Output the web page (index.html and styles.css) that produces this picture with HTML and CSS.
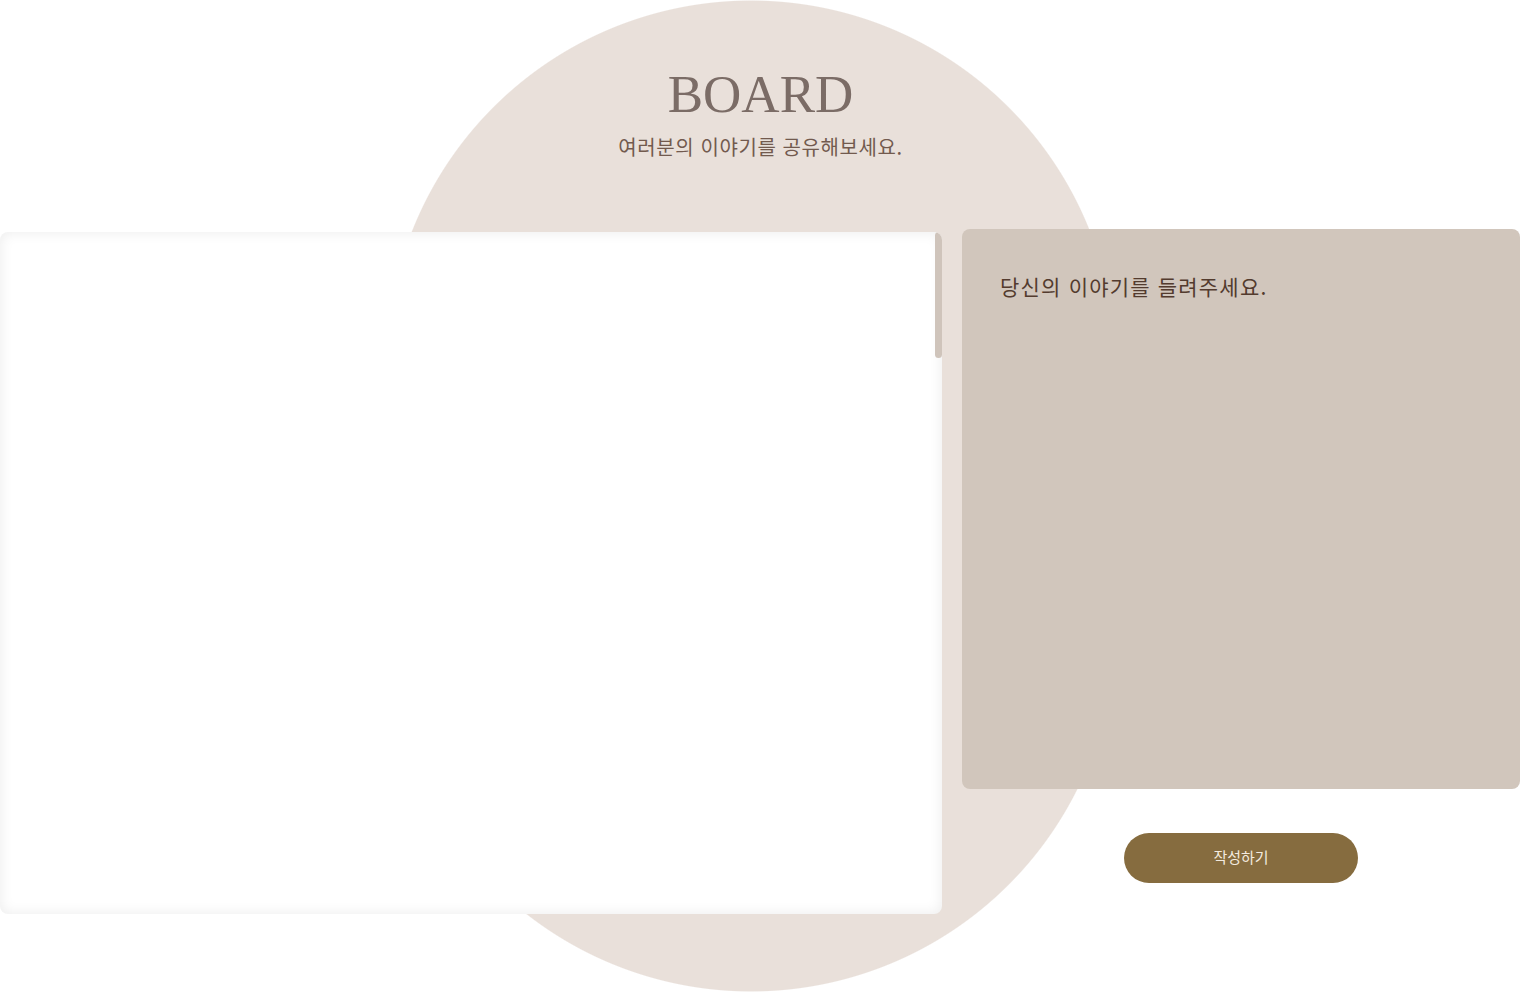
FILE: index.html
```html
<!DOCTYPE html>
<html lang="ko">
  <head>
    <meta charset="UTF-8" />
    <meta name="viewport" content="width=device-width, initial-scale=1.0" />
    <title>BOARD</title>
    <link rel="stylesheet" href="styles.css">
  </head>
  <body>
    <header class="board-header">
      <h1 class="board-title">BOARD</h1>
      <p class="board-subtitle">여러분의 이야기를 공유해보세요.</p>
    </header>

    <main class="board-main">
      <!-- 글 목록 -->
      <section class="post-list">
        <div class="post-items"></div>
      </section>

      <!-- 글 작성 -->
      <section class="post-write">
        <textarea class="post-input" placeholder="당신의 이야기를 들려주세요."></textarea>
        <button class="submit-btn">작성하기</button>
      </section>
    </main>
  </body>
</html>
```

FILE: styles.css
```css
html,
body {
  margin: 0;
  padding: 0;
}
/* pill shaped backdrop: two half circles + middle block */
body {
  height: 992px;
  overflow: hidden;
  background-color: white;
  background-image:
    radial-gradient(circle 365px at 751px 365px, #e9e0da 99.7%, rgba(233, 224, 218, 0) 100%),
    radial-gradient(circle 365px at 751px 627px, #e9e0da 99.7%, rgba(233, 224, 218, 0) 100%),
    linear-gradient(#e9e0da, #e9e0da);
  background-size: 100% 100%, 100% 100%, 730px 262px;
  background-position: 0 0, 0 0, 386px 365px;
  background-repeat: no-repeat;
  font-family: "Noto Sans CJK KR", "Noto Sans", sans-serif;
}

/* Header */
.board-header {
  padding-top: 68px;
  text-align: center;
}
.board-title {
  margin: 0;
  font-family: "Liberation Serif", serif;
  font-weight: normal;
  font-size: 53px;
  line-height: 1;
  color: #7b6c66;
}
.board-subtitle {
  margin: 16px 0 0;
  font-size: 20px;
  font-weight: 400;
  letter-spacing: 0.6px;
  line-height: 1;
  color: #725a4e;
}

/* Main */
.board-main {
  display: grid;
  grid-template-columns: 942px 558px;
  gap: 20px;
  align-items: start;
  margin-top: 72px;
}
.post-list {
  position: relative;
  height: 682px;
  margin-top: 3px;
  overflow: hidden;
  background-color: white;
  border-radius: 8px;
  box-shadow: inset 0 0 14px rgba(0, 0, 0, 0.08);
}
.post-items {
  height: 3690px;
}
/* scroll thumb */
.post-list::after {
  content: "";
  position: absolute;
  top: 0;
  right: 0;
  width: 7px;
  height: 126px;
  background-color: #cfc4bb;
  border-radius: 4px;
}

.post-write {
  display: flex;
  flex-direction: column;
  align-items: center;
}
.post-input {
  box-sizing: border-box;
  width: 100%;
  height: 560px;
  padding: 42px 38px;
  border: none;
  border-radius: 8px;
  background-color: #d1c6bc;
  resize: none;
  outline: none;
  font-family: inherit;
  font-size: 21px;
  font-weight: 400;
  letter-spacing: 1.2px;
  line-height: 1.5;
  color: #533b2e;
}
.post-input::placeholder {
  color: #533b2e;
}
.submit-btn {
  width: 234px;
  height: 50px;
  margin-top: 44px;
  padding: 0 0 3px;
  border: none;
  border-radius: 25px;
  background-color: #866c3f;
  color: #f3eadf;
  font-family: inherit;
  font-size: 15px;
  cursor: pointer;
}
```
